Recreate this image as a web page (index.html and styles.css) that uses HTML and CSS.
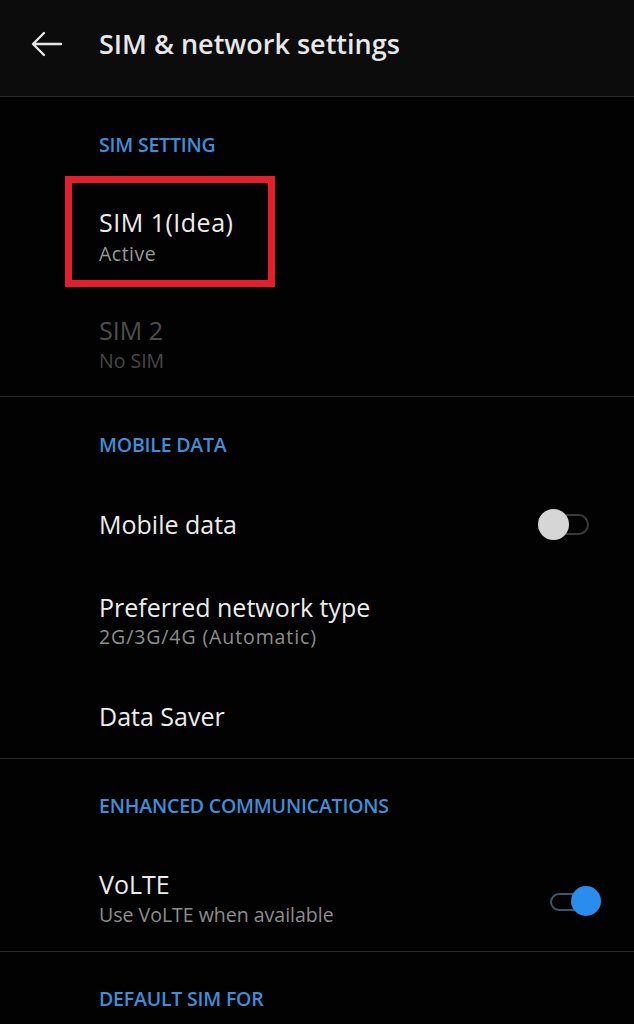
FILE: index.html
```html
<!DOCTYPE html>
<html>
<head>
<meta charset="utf-8">
<link rel="stylesheet" href="styles.css">
</head>
<body>
<div class="screen">
  <header class="appbar">
    <svg class="back" width="32" height="26" viewBox="0 0 32 26"><path d="M30 13H3M13 2L2 13l11 11" fill="none" stroke="#e6e6e6" stroke-width="2.4" stroke-linecap="round" stroke-linejoin="round"/></svg>
    <h1 class="title">SIM &amp; network settings</h1>
  </header>

  <section class="group g1">
    <div class="cat">SIM SETTING</div>
    <div class="item sim1">
      <div class="hl"></div>
      <div class="t">SIM 1(Idea)</div>
      <div class="s">Active</div>
    </div>
    <div class="item sim2 disabled">
      <div class="t">SIM 2</div>
      <div class="s">No SIM</div>
    </div>
  </section>

  <section class="group g2">
    <div class="cat">MOBILE DATA</div>
    <div class="item row md">
      <div class="t">Mobile data</div>
      <div class="switch off"><span class="track"></span><span class="knob"></span></div>
    </div>
    <div class="item pnt">
      <div class="t">Preferred network type</div>
      <div class="s">2G/3G/4G (Automatic)</div>
    </div>
    <div class="item ds">
      <div class="t">Data Saver</div>
    </div>
  </section>

  <section class="group g3">
    <div class="cat">ENHANCED COMMUNICATIONS</div>
    <div class="item row volte">
      <div class="txt">
        <div class="t">VoLTE</div>
        <div class="s">Use VoLTE when available</div>
      </div>
      <div class="switch on"><span class="track"></span><span class="knob"></span></div>
    </div>
  </section>

  <section class="group g4">
    <div class="cat">DEFAULT SIM FOR</div>
  </section>
</div>
</body>
</html>
```

FILE: styles.css
```css
* { box-sizing: border-box; margin: 0; padding: 0; }
html, body { background: #020202; }
body { margin: 0; font-family: "Open Sans", "Noto Sans", sans-serif; color: #ececec; }
.screen { width: 634px; height: 1024px; overflow: hidden; background: #020202; }

.appbar {
  height: 97px;
  background: #0c0c0c;
  border-bottom: 1px solid #2a2a2a;
  display: flex;
  align-items: center;
  padding-left: 31px;
  padding-bottom: 9px;
}
.back { display: block; margin-right: 36px; }
.title { font-size: 27px; font-weight: 600; color: #e8e8e8; line-height: 36px; }

.group { border-bottom: 1px solid #2a2a2a; padding-left: 99px; padding-right: 32px; }
.cat {
  color: #3f8ed8;
  font-size: 19.5px;
  font-weight: 600;
  letter-spacing: -0.2px;
  height: 24px;
  line-height: 24px;
  white-space: nowrap;
}
.item { position: relative; }
.t { font-size: 25px; line-height: 32px; color: #ededed; white-space: nowrap; }
.s { font-size: 19.5px; line-height: 24px; color: #999999; white-space: nowrap; }

.g1 { height: 300px; padding-top: 36px; }
.sim1 { margin-top: 49px; }
.sim1 .t { letter-spacing: 0.5px; }
.sim1 .s { margin-top: 4px; letter-spacing: 0.5px; }
.hl {
  position: absolute;
  left: -34px; top: -30px;
  width: 210px; height: 111px;
  border: 7px solid #e2202b;
}
.sim2 { margin-top: 48px; }
.sim2 .s { margin-top: 3px; }
.disabled .t { color: #4e4e4e; }
.disabled .s { color: #474747; }

.g2 { height: 362px; padding-top: 36px; }
.row { display: flex; align-items: center; justify-content: space-between; }
.md { margin-top: 37px; height: 60px; }
.pnt { margin-top: 37px; }
.pnt .s { margin-top: 2px; color: #8e8e8e; letter-spacing: 0.9px; }
.ds { margin-top: 51px; }

.g3 { height: 193px; padding-top: 35px; }
.volte { margin-top: 50px; }
.volte .s { margin-top: 3px; color: #8e8e8e; }

.g4 { border-bottom: none; padding-top: 35px; }

.switch { position: relative; width: 51px; height: 31px; }
.switch .track {
  position: absolute; top: 5px; height: 21px; left: 8px; right: 0;
  border: 2px solid #3a3a3a; border-radius: 11px;
}
.switch .knob {
  position: absolute; top: 0; width: 31px; height: 31px; border-radius: 50%;
}
.switch.off { margin-right: 13px; }
.switch.off .knob { left: 0; background: #d6d6d6; }
.switch.on { margin-right: 1px; margin-top: 7px; }
.switch.on .track { left: 0; right: 8px; top: 7px; height: 18px; border-color: #3c5670; }
.switch.on .knob { right: 0; width: 30px; height: 30px; background: #2a8cec; }
```
